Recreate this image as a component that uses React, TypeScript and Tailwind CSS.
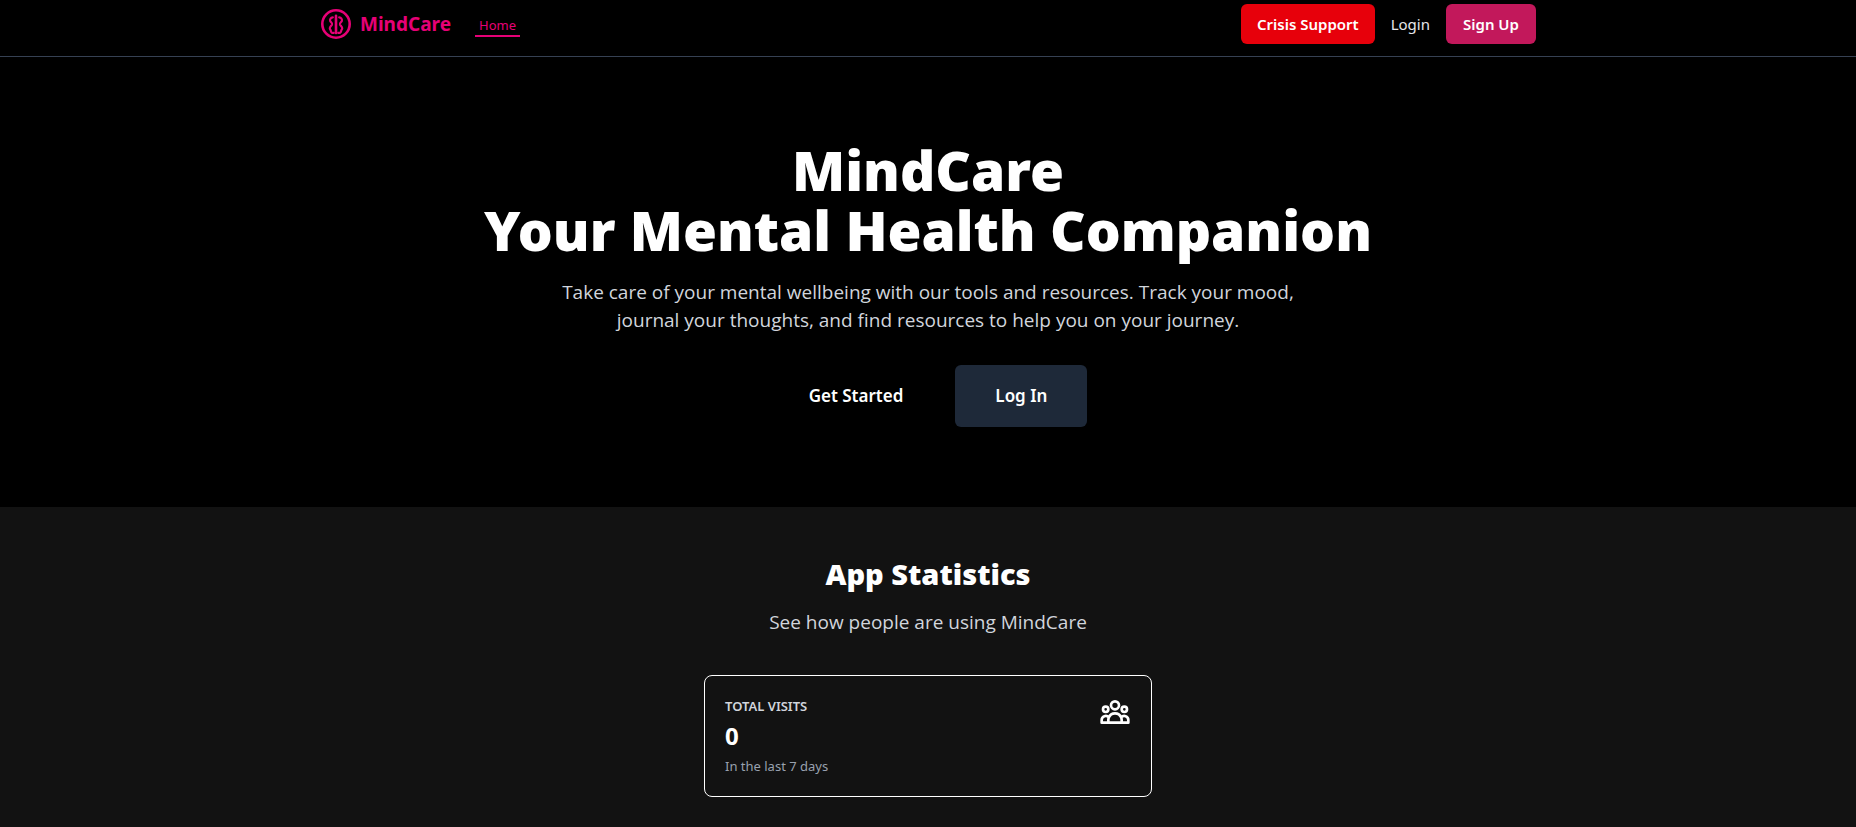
function BrandMark() {
  return (
    <svg viewBox="0 0 32 32" className="size-8 shrink-0" fill="none" stroke="currentColor" strokeLinecap="round" strokeLinejoin="round" aria-hidden="true">
      <circle cx="16" cy="16" r="13.7" strokeWidth="2.6" />
      <path d="M16 7.8v17.2" strokeWidth="2.6" />
      <path d="M12.8 9.4C10.8 9.6 9.6 11.4 10.2 13C10.8 14.4 12.4 14.6 12 16.4C11.6 18 9.6 18.6 9.8 20.6C10 21.8 11 21.8 10.8 23C11 24.8 12.4 25 13.8 24.8" strokeWidth="2.2" />
      <path d="M19.2 9.4C21.2 9.6 22.4 11.4 21.8 13C21.2 14.4 19.6 14.6 20 16.4C20.4 18 22.4 18.6 22.2 20.6C22 21.8 21 21.8 21.2 23C21 24.8 19.6 25 18.2 24.8" strokeWidth="2.2" />
    </svg>
  );
}

function PeopleIcon() {
  return (
    <svg viewBox="0 0 24 24" className="size-8 shrink-0 text-white" fill="none" stroke="currentColor" strokeWidth="2" strokeLinecap="round" strokeLinejoin="round" aria-hidden="true">
      <path d="M17 20h5v-2a3 3 0 00-5.356-1.857M17 20H7m10 0v-2c0-.656-.126-1.283-.356-1.857M7 20H2v-2a3 3 0 015.356-1.857M7 20v-2c0-.656.126-1.283.356-1.857m0 0a5.002 5.002 0 019.288 0M15 7a3 3 0 11-6 0 3 3 0 016 0zm6 3a2 2 0 11-4 0 2 2 0 014 0zM7 10a2 2 0 11-4 0 2 2 0 014 0z" />
    </svg>
  );
}

function Header() {
  return (
    <header className="border-b border-[#364153] bg-black">
      <div className="mx-auto flex max-w-7xl items-center justify-between px-8 pt-1 pb-3">
        <div className="flex items-center gap-6 text-[#e60076]">
          <a href="#top" className="flex items-center gap-2 text-[19px] leading-7 font-bold">
            <BrandMark />
            MindCare
          </a>
          <nav>
            <a href="#home" aria-current="page" className="block border-b-2 border-[#e60076] px-1 pt-1 text-[13px] leading-5">
              Home
            </a>
          </nav>
        </div>
        <div className="flex items-center gap-4 text-[15px] leading-6">
          <button type="button" className="rounded-md bg-[#e7000b] px-4 py-2 font-semibold text-white">
            Crisis Support
          </button>
          <a href="#login" className="text-gray-200">
            Login
          </a>
          <button type="button" className="min-w-[90px] rounded-md bg-[#c2185b] px-4 py-2 font-semibold text-white">
            Sign Up
          </button>
        </div>
      </div>
    </header>
  );
}

function Hero() {
  return (
    <section className="bg-black px-8 pt-[83px] pb-20 text-center">
      <h1 className="text-[55px] leading-[60px] font-black text-white">
        MindCare
        <br />
        Your Mental Health Companion
      </h1>
      <p className="mx-auto mt-[18px] max-w-3xl font-['Open_Sans','Noto_Sans',sans-serif] text-[19px] leading-7 text-gray-300">
        Take care of your mental wellbeing with our tools and resources. Track your mood, journal your thoughts, and find resources to help you on your journey.
      </p>
      <div className="mt-[31px] flex justify-center gap-3 text-[17px] leading-[30px] font-semibold text-white">
        <button type="button" className="rounded-md px-10 py-4">
          Get Started
        </button>
        <button type="button" className="rounded-md bg-[#1e2939] px-10 py-4">
          Log In
        </button>
      </div>
    </section>
  );
}

function Statistics() {
  return (
    <section className="grow bg-[#121212] px-8 pt-[49px] pb-12 text-center">
      <h2 className="text-[29px] leading-9 font-black text-white">App Statistics</h2>
      <p className="mt-4 font-['Open_Sans','Noto_Sans',sans-serif] text-[19px] leading-7 text-gray-300">
        See how people are using MindCare
      </p>
      <div className="mx-auto mt-[39px] flex max-w-md items-start justify-between rounded-lg border border-white p-5 text-left">
        <div>
          <h3 className="text-[13px] leading-5 font-semibold text-gray-300 uppercase">Total Visits</h3>
          <p className="my-1 text-2xl leading-8 font-bold text-white">0</p>
          <p className="text-[13px] leading-5 text-gray-400">In the last 7 days</p>
        </div>
        <PeopleIcon />
      </div>
    </section>
  );
}

export default function App() {
  return (
    <div className="flex min-h-screen flex-col bg-black font-['Noto_Sans','Open_Sans',sans-serif]">
      <Header />
      <main className="flex grow flex-col">
        <Hero />
        <Statistics />
      </main>
    </div>
  );
}
